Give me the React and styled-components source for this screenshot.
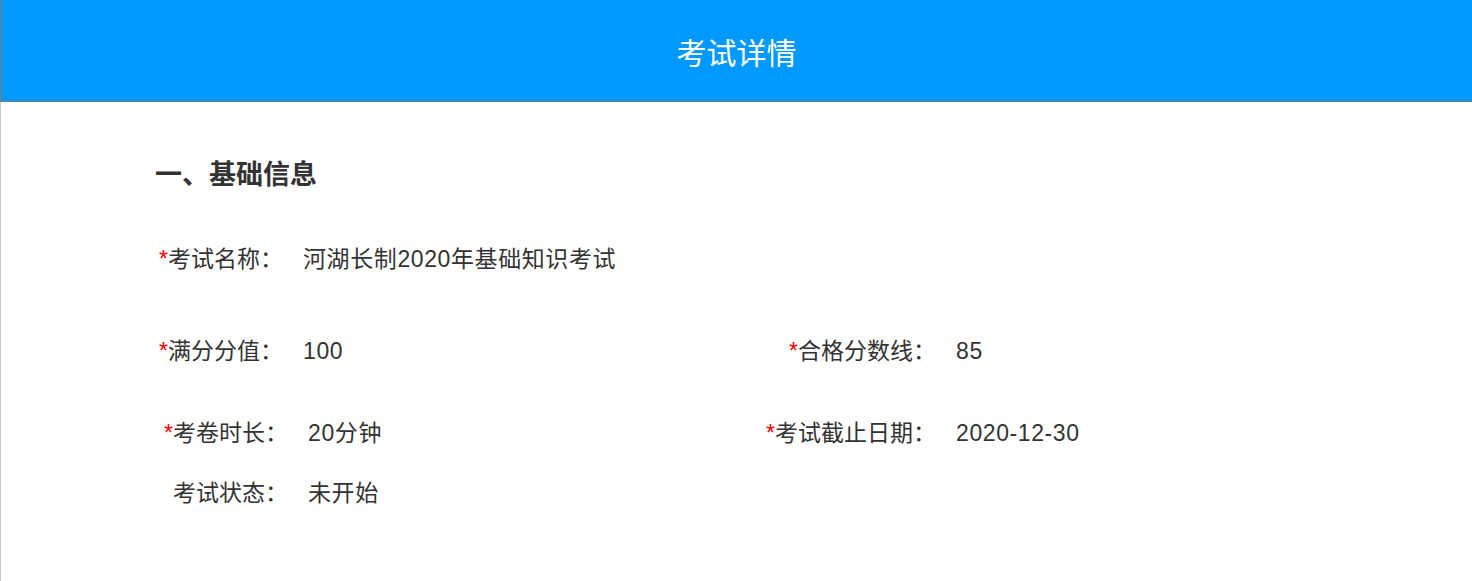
import React from 'react';
import styled, { createGlobalStyle } from 'styled-components';

const GlobalStyle = createGlobalStyle`
  html, body {
    margin: 0;
    padding: 0;
    background: #fff;
  }

  body {
    font-family: 'Liberation Sans', 'Noto Sans CJK SC', sans-serif;
    color: #333;
  }
`;

const Page = styled.div`
  min-height: 100vh;
  border-left: 1px solid #c8c8c8;
  box-sizing: border-box;
`;

const Header = styled.header`
  display: flex;
  align-items: center;
  justify-content: center;
  height: 101px;
  margin-left: -1px;
  background: #0099ff;
  border-left: 1px solid #7a7a7a;
  border-bottom: 1px solid #7a7a7a;
  color: #fff;
  font-size: 30px;
`;

const Content = styled.main`
  padding: 55px 0 40px 155px;
`;

const SectionTitle = styled.h2`
  margin: 0 0 50px -1px;
  font-size: 27px;
  line-height: 36px;
  font-weight: 700;
  color: #333;
`;

const Row = styled.div`
  display: grid;
  grid-template-columns: 600px 1fr;
  margin-top: ${(p) => p.$gap || 0}px;
  padding-left: ${(p) => p.$shift || 0}px;
`;

const Field = styled.div`
  display: flex;
  align-items: baseline;
  font-size: 23px;
  line-height: 32px;
`;

const Label = styled.span`
  flex: none;
  width: ${(p) => p.$width}px;
  text-align: right;
  color: #333;
`;

const Star = styled.span`
  color: #ff0000;
`;

const Value = styled.span`
  margin-left: 20px;
  letter-spacing: 0.6px;
  color: #333;
`;

const Item = ({ label, value, required, width = 127 }) => (
  <Field>
    <Label $width={width}>
      {required && <Star>*</Star>}
      {label}：
    </Label>
    <Value>{value}</Value>
  </Field>
);

const App = () => {
  return (
    <Page>
      <GlobalStyle />
      <Header>考试详情</Header>
      <Content>
        <SectionTitle>一、基础信息</SectionTitle>

        <Row>
          <Item required label='考试名称' value='河湖长制2020年基础知识考试' />
        </Row>

        <Row $gap={60}>
          <Item required label='满分分值' value='100' />
          <Item required label='合格分数线' value='85' width={180} />
        </Row>

        <Row $gap={50} $shift={5}>
          <Item required label='考卷时长' value='20分钟' />
          <Item required label='考试截止日期' value='2020-12-30' width={175} />
        </Row>

        <Row $gap={28} $shift={5}>
          <Item label='考试状态' value='未开始' />
        </Row>
      </Content>
    </Page>
  );
};

export default App;
